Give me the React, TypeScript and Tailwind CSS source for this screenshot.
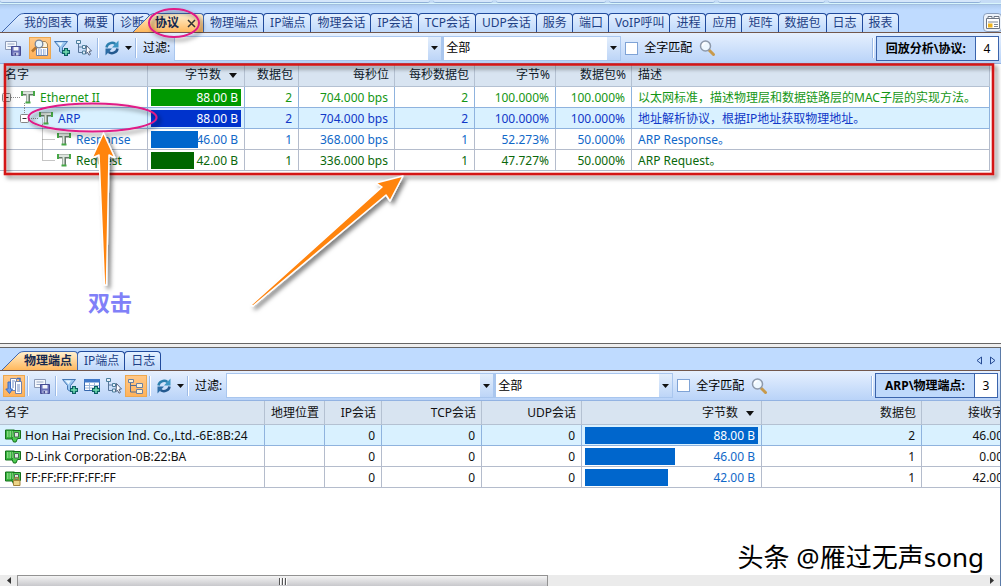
import type { ReactNode } from "react";

const FONT = "font-['Noto_Sans','Noto_Sans_CJK_SC',sans-serif]";

const topTabs = [
  "我的图表", "概要", "诊断", "协议", "物理端点", "IP端点", "物理会话", "IP会话", "TCP会话", "UDP会话",
  "服务", "端口", "VoIP呼叫", "进程", "应用", "矩阵", "数据包", "日志", "报表",
];
const bottomTabs = ["物理端点", "IP端点", "日志"];

const protocols = [
  { name: "Ethernet II", level: 0, bytes: 88, packets: 2, bps: "704.000 bps", pps: 2, bytePct: "100.000%", packetPct: "100.000%", desc: "以太网标准，描述物理层和数据链路层的MAC子层的实现方法。", text: "text-[#149614]", bar: "bg-[#009900]" },
  { name: "ARP", level: 1, bytes: 88, packets: 2, bps: "704.000 bps", pps: 2, bytePct: "100.000%", packetPct: "100.000%", desc: "地址解析协议，根据IP地址获取物理地址。", text: "text-[#1038c8]", bar: "bg-[#0033cc]" },
  { name: "Response", level: 2, bytes: 46, packets: 1, bps: "368.000 bps", pps: 1, bytePct: "52.273%", packetPct: "50.000%", desc: "ARP Response。", text: "text-[#1068c8]", bar: "bg-[#0066cc]" },
  { name: "Request", level: 2, bytes: 42, packets: 1, bps: "336.000 bps", pps: 1, bytePct: "47.727%", packetPct: "50.000%", desc: "ARP Request。", text: "text-[#0a680a]", bar: "bg-[#006600]" },
];

const endpoints = [
  { name: "Hon Hai Precision Ind. Co.,Ltd.-6E:8B:24", bytes: 88, packets: 2, received: "46.00 B", locked: false },
  { name: "D-Link Corporation-0B:22:BA", bytes: 46, packets: 1, received: "0.00 B", locked: false },
  { name: "FF:FF:FF:FF:FF:FF", bytes: 42, packets: 1, received: "42.00 B", locked: true },
];

/* ---------- icons ---------- */

function Svg({ children }: { children: ReactNode }) {
  return (
    <svg width="18" height="18" viewBox="0 0 18 18" fill="none" className="shrink-0" aria-hidden="true">
      {children}
    </svg>
  );
}

const SaveIcon = () => (
  <Svg>
    <path d="M1.5 2.5h11v8h-11z" fill="#f4f7fc" stroke="#8c9bb8" />
    <path d="M3.5 5h7M3.5 7.5h5" stroke="#98a8c4" />
    <path d="M7.500 7.500h9v9h-9z" fill="#6a70b8" stroke="#454b92" />
    <path d="M9.500 8h5v3.500h-5z" fill="#f3f5fb" />
    <path d="M9.500 13.500h5v3h-5z" fill="#c9cde6" />
    <path d="M10.500 14h1.500v2.500h-1.500z" fill="#454b92" />
  </Svg>
);

const FindIcon = () => (
  <Svg>
    <path d="M5.500 8.500h11v8h-11z" fill="#fff" stroke="#6a7fa8" />
    <path d="M10.500 8.500v-6h4l2 2.500v3.500z" fill="#fdf3dd" stroke="#a98550" />
    <path d="M7 11h8M7 13h8M7 15h8" stroke="#4f78c4" strokeDasharray="1.500 1" />
    <path d="M5.500 8 1 12.500" stroke="#b8762c" strokeWidth="2.500" />
    <circle cx="8" cy="5" r="3.800" fill="#e6f4fc" stroke="#778499" strokeWidth="1.300" />
  </Svg>
);

const Plus = () => <path d="M13 9v8M9 13h8" stroke="#0b5f62" strokeWidth="4" />;
const PlusInner = () => <path d="M13 10v6M10 13h6" stroke="#72e0b0" strokeWidth="1.500" />;

const FilterIcon = () => (
  <Svg>
    <path d="M1.500 2.500h13l-5 6v6l-3-2V8.500z" fill="#9cc8f0" stroke="#4477b4" />
    <path d="M4 3.500h6l-2.500 4z" fill="#e8f5ff" />
    <Plus />
    <PlusInner />
  </Svg>
);

const TableAddIcon = () => (
  <Svg>
    <path d="M1.500 2.500h15v11h-15z" fill="#fff" stroke="#3566ac" />
    <path d="M1 2h16v3.500H1z" fill="#3f78c8" />
    <path d="M2 8.500h14M2 11h14M6.500 6v7M11.500 6v7" stroke="#9db6d8" />
    <Plus />
    <PlusInner />
  </Svg>
);

const TreeCursorIcon = () => (
  <Svg>
    <path d="M3.500 4v9.500h4M3.500 8h4" stroke="#58769a" />
    <path d="M1.500 1.500h4v3h-4zM7.500 6.500h3v3h-3zM7.500 12h3v3h-3z" fill="#e8f0fa" stroke="#4d7f9c" />
    <path d="m11.500 6.500 5 5.500-2.500.3 1.500 3-1.500.9-1.500-3-1.500 1.500z" fill="#fff" stroke="#53627f" />
  </Svg>
);

const TreeIcon = () => (
  <Svg>
    <path d="M3.500 6v9h6M3.500 8.500h6" stroke="#536d92" />
    <path d="M1.500 2.500h5v3h-5zM9.500 6.500h6v4h-6zM9.500 12.500h6v4h-6z" fill="#fff0d0" stroke="#6a81a4" />
  </Svg>
);

const SwapIcon = () => (
  <Svg>
    <path d="M5.500 1.500h6v12h-6z" fill="#fff" stroke="#7183ad" />
    <path d="M10.500 4.500h6v12h-6z" fill="#fff" stroke="#7183ad" />
    <path d="M7 4h3M7 6h2M7 8h2M7 10h2M12 8h3M12 10h3M12 12h3M12 14h3" stroke="#6e8bc4" />
    <path d="M3 5v7H.800L4.500 16.500 7.500 12H5.500V5z" stroke="#3d6cc0" fill="#6c9cea" />
    <path d="M12 1.500h3v3" stroke="#3d6cc0" strokeWidth="1.500" />
  </Svg>
);

const RefreshIcon = () => (
  <Svg>
    <path d="M3.500 8.500C4 4.500 9 2.500 12.500 5" stroke="#2c7fae" strokeWidth="2.500" />
    <path d="M15.500 1.500v7h-6.500z" fill="#3c96c4" />
    <path d="M14.500 9.500c-.5 4-5.500 6-9 3.500" stroke="#23598f" strokeWidth="2.500" />
    <path d="M2.500 16.500v-7H9z" fill="#2b6ba4" />
  </Svg>
);

const SearchIcon = () => (
  <Svg>
    <path d="m11 11 4.500 4.500" stroke="#c89a4c" strokeWidth="3" strokeLinecap="round" />
    <circle cx="7.500" cy="7" r="5" fill="#eef8ff" stroke="#8d99ab" strokeWidth="1.500" />
    <path d="M4.500 7a3 3 0 0 1 3-3" stroke="#fff" strokeWidth="1.500" />
  </Svg>
);

const CardIcon = ({ locked }: { locked: boolean }) => (
  <svg width="17" height="15" viewBox="0 0 17 15" className="shrink-0" aria-hidden="true">
    <path d="M.500 1h9v9h-9z" fill="#35b53c" stroke="#14701c" />
    <path d="M8 1.500h7.500v8h-3l-1.500 3.500H8.500L7 9.500z" fill="#4ccb50" stroke="#14701c" />
    <path d="M2 3h6M2 5h6M2 7h6" stroke="#d5f6c8" strokeDasharray="1.500 1" />
    <path d="M9.500 3.500h4v4.500h-4z" fill="#dfe5e4" stroke="#476b50" />
    {locked && <path d="M9.500 10V8.500a2 2 0 0 1 4 0V10" fill="none" stroke="#9c8444" strokeWidth="1.500" />}
    {locked && <path d="M8.500 9.500h6.500v5H8.500z" fill="#ecd488" stroke="#a2823c" />}
  </svg>
);

const ProtocolIcon = () => (
  <svg width="16" height="14" viewBox="0 0 16 14" className="relative shrink-0" aria-hidden="true">
    <path d="M2 3.500h12" stroke="#66786a" strokeWidth="4" />
    <path d="M8 4v9" stroke="#66786a" strokeWidth="4" />
    <path d="M3 3h10M7.500 3v9" stroke="#dde5de" strokeWidth="2" />
    <path d="M2 1v5M14 1v5M5.500 12.500h5" stroke="#46a846" strokeWidth="2" />
  </svg>
);

const Caret = () => (
  <svg width="7" height="4" viewBox="0 0 7 4" className="shrink-0" aria-hidden="true">
    <path d="M0 0h7L3.500 4z" fill="#111" />
  </svg>
);

const SortArrow = () => (
  <svg width="8" height="5" viewBox="0 0 8 5" className="ml-2 inline-block align-middle" aria-hidden="true">
    <path d="M0 0h8L4 5z" fill="#111" />
  </svg>
);

// dotted guide lines and the expander box in front of a tree node
function TreeGuide({ level }: { level: number }) {
  const x = level * 18 + 7;
  const last = level === 2;
  return (
    <svg width={level * 18 + 20} height="20" className="shrink-0 overflow-visible" aria-hidden="true">
      <g stroke="#8a8a8a" strokeDasharray="1 1" fill="none">
        {last ? <path d="M42.500 -10.500v21h13" /> : <path d={`M${x + 4} 10.500h9M${x + 17.5} 16v5`} />}
        {level === 1 && <path d="M24.500 0v6" />}
      </g>
      {!last && (
        <g>
          <rect x={x - 4.5} y="6.500" width="8" height="8" rx="1" fill="#fff" stroke="#858585" />
          <path d={`M${x - 2.5} 10.500h4`} stroke="#333" />
        </g>
      )}
    </svg>
  );
}

/* ---------- controls ---------- */

function TabBar({ tabs, active, closable, children }: { tabs: string[]; active: number; closable?: boolean; children?: ReactNode }) {
  return (
    <div className="flex items-end border-b border-[#72574c] bg-[#bfdbff] pl-[2px]">
      <div role="tablist" className="flex items-end">
        {tabs.map((label, i) => {
          const on = i === active;
          const slanted = i === 0 || on;
          if (!slanted) {
            return (
              <button
                key={label}
                role="tab"
                aria-selected={false}
                className="-ml-px h-[19px] whitespace-nowrap rounded-t-[4px] border border-b-0 border-[#204a9c] bg-linear-to-b from-[#e4f0ff] to-[#bfd9fb] pl-[6px] pr-[5px] text-[12px] leading-[18px] text-[#1d3f85]"
              >
                {label}
              </button>
            );
          }
          return (
            <button
              key={label}
              role="tab"
              aria-selected={on}
              className={`relative flex h-[19px] whitespace-nowrap text-[12px] leading-[18px] ${i > 0 ? "-ml-[17px]" : ""} ${on ? "font-bold text-[#15294f]" : "text-[#1d3f85]"}`}
            >
              <svg width="22" height="19" viewBox="0 0 22 19" className="shrink-0" aria-hidden="true">
                <defs>
                  <linearGradient id={on ? "tabOn" : "tabOff"} x1="0" y1="0" x2="0" y2="1">
                    <stop offset="0" stopColor={on ? "#fff0cf" : "#e4f0ff"} />
                    <stop offset="1" stopColor={on ? "#ffb85c" : "#bfd9fb"} />
                  </linearGradient>
                </defs>
                <path d="M0 19 17 2q2-1.500 5-1.500V19z" fill={`url(#${on ? "tabOn" : "tabOff"})`} />
                <path d="M0 19 17 2q2-1.500 5-1.500" fill="none" stroke="#4068b0" />
              </svg>
              <span
                className={`flex h-[19px] items-center rounded-tr-[4px] border-r border-t pr-[5px] ${on ? "border-[#4068b0] bg-linear-to-b from-[#fff0cf] to-[#ffb85c]" : "border-[#204a9c] bg-linear-to-b from-[#e4f0ff] to-[#bfd9fb]"}`}
              >
                {label}
                {closable && on && (
                  <svg width="9" height="9" viewBox="0 0 9 9" className="ml-2 mr-[2px]" aria-hidden="true">
                    <path d="m1 1 7 7M8 1 1 8" stroke="#333" strokeWidth="1.500" />
                  </svg>
                )}
              </span>
            </button>
          );
        })}
      </div>
      {children}
    </div>
  );
}

function ToolButton({ label, on, children }: { label: string; on?: boolean; children: ReactNode }) {
  return (
    <button
      aria-label={label}
      className={`flex size-[22px] shrink-0 items-center justify-center ${on ? "border border-[#eda850] bg-linear-to-b from-[#ffc887] to-[#ffb25a]" : ""}`}
    >
      {children}
    </button>
  );
}

const Divider = () => <span className="mx-[2px] h-[20px] w-[2px] shrink-0 border-l border-[#9dbbe6] bg-white" />;

function FilterFields({ id }: { id: string }) {
  return (
    <>
      <label htmlFor={`${id}-filter`} className="mx-1 shrink-0">过滤:</label>
      <div className="flex h-[25px] w-[268px] items-center border border-[#a9c6ee] bg-white">
        <input id={`${id}-filter`} className="h-full min-w-0 flex-1 px-1 outline-none" />
        <button aria-label="展开" className="flex h-full w-[13px] items-center justify-center bg-linear-to-b from-[#e3eefc] to-[#bdd5f7]">
          <Caret />
        </button>
      </div>
      <div className="relative flex h-[25px] w-[179px] items-center border border-l-2 border-[#a9c6ee] bg-white">
        <select aria-label="范围" className="h-full w-full appearance-none pl-[2px] outline-none">
          <option>全部</option>
        </select>
        <span className="pointer-events-none absolute inset-y-0 right-0 flex w-[13px] items-center justify-center bg-linear-to-b from-[#e3eefc] to-[#bdd5f7]">
          <Caret />
        </span>
      </div>
      <label className="ml-1 flex shrink-0 items-center gap-[6px]">
        <input type="checkbox" className="size-[13px] appearance-none border border-[#7fa3d6] bg-white" />
        全字匹配
      </label>
      <button aria-label="搜索" className="ml-[6px]">
        <SearchIcon />
      </button>
    </>
  );
}

function Counter({ title, count }: { title: string; count: number }) {
  return (
    <div className="ml-auto flex items-center">
      <Divider />
      <div className="flex h-[25px] border border-[#3b64ac] text-[12px] leading-[23px]">
        <strong className="whitespace-nowrap bg-[#bfd9fb] px-[9px]">{title}</strong>
        <span className="w-[23px] border-l border-[#3b64ac] bg-white text-center">{count}</span>
      </div>
    </div>
  );
}

function ByteBar({ bytes, bar, text }: { bytes: number; bar: string; text: string }) {
  return (
    <div className="relative mx-[3px] flex h-[17px] items-center justify-end">
      <span className={`absolute inset-y-0 left-0 ${bar}`} style={{ width: `${(bytes / 88) * 100}%` }} />
      <span className={`relative pr-[3px] pt-[2px] ${bytes === 88 ? "text-white" : text}`}>{bytes}.00 B</span>
    </div>
  );
}

const th = "overflow-hidden whitespace-nowrap border-b border-r border-[#b4c1d2] px-[5px] text-right font-normal";
const tdBase = "whitespace-nowrap border-b border-r";
const td = `${tdBase} overflow-hidden pl-[5px] pr-[6px] pt-[2px] text-right`;

/* ---------- panels ---------- */

function ProtocolTable() {
  return (
    <div className="mr-[11px]">
      <table className="w-full table-fixed border-separate border-spacing-0 text-[12px] leading-[18px]">
        <colgroup>
          <col className="w-[148px]" />
          <col className="w-[97px]" />
          <col className="w-[54px]" />
          <col className="w-[96px]" />
          <col className="w-[80px]" />
          <col className="w-[81px]" />
          <col className="w-[76px]" />
          <col />
        </colgroup>
        <thead className="bg-[#d8e4f1] text-[#0f1a2a]">
          <tr className="h-[23px]">
            <th className={`${th} !text-left`}>名字</th>
            <th className={`${th} !pr-[7px]`}>字节数<SortArrow /></th>
            <th className={th}>数据包</th>
            <th className={th}>每秒位</th>
            <th className={th}>每秒数据包</th>
            <th className={th}>字节%</th>
            <th className={th}>数据包%</th>
            <th className={`${th} !pl-[6px] !text-left`}>描述</th>
          </tr>
        </thead>
        <tbody>
          {protocols.map((p) => {
            const selected = p.name === "ARP";
            const line = selected || p.level === 0 ? "border-[#8fb3de]" : "border-[#b4bccc]";
            const cell = `${td} ${line}`;
            return (
              <tr key={p.name} className={`h-[21px] ${p.text} ${selected ? "bg-[#d9f1ff]" : ""}`}>
                <td className={`${tdBase} ${line}`}>
                  <div className="flex h-[20px] items-center">
                    <TreeGuide level={p.level} />
                    <ProtocolIcon />
                    <span className="ml-1 pt-[2px]">{p.name}</span>
                  </div>
                </td>
                <td className={`${tdBase} ${line}`}>
                  <ByteBar bytes={p.bytes} bar={p.bar} text={p.text} />
                </td>
                <td className={cell}>{p.packets}</td>
                <td className={cell}>{p.bps}</td>
                <td className={cell}>{p.pps}</td>
                <td className={cell}>{p.bytePct}</td>
                <td className={cell}>{p.packetPct}</td>
                <td className={`${cell} !pl-[6px] !text-left`}>{p.desc}</td>
              </tr>
            );
          })}
        </tbody>
      </table>
    </div>
  );
}

function EndpointTable() {
  return (
    <div className="overflow-hidden">
      <table className="w-[calc(100%+41px)] table-fixed border-separate border-spacing-0 text-[12px] leading-[18px] text-[#111]">
        <colgroup>
          <col className="w-[265px]" />
          <col className="w-[60px]" />
          <col className="w-[57px]" />
          <col className="w-[100px]" />
          <col className="w-[100px]" />
          <col className="w-[180px]" />
          <col className="w-[160px]" />
          <col />
        </colgroup>
        <thead className="bg-[#d8e4f1]">
          <tr className="h-[24px]">
            <th className={`${th} !text-left`}>名字</th>
            <th className={th}>地理位置</th>
            <th className={th}>IP会话</th>
            <th className={th}>TCP会话</th>
            <th className={th}>UDP会话</th>
            <th className={`${th} !pr-[7px]`}>字节数<SortArrow /></th>
            <th className={th}>数据包</th>
            <th className={`${th} !pl-[46px] !text-left`}>接收字节数</th>
          </tr>
        </thead>
        <tbody>
          {endpoints.map((e, i) => {
            const line = i === 0 ? "border-[#8fb3de]" : "border-[#b4bccc]";
            const cell = `${td} ${line}`;
            return (
              <tr key={e.name} className={`h-[21px] ${i === 0 ? "bg-[#d9f1ff]" : ""}`}>
                <td className={cell}>
                  <div className="flex items-center gap-[3px]">
                    <CardIcon locked={e.locked} />
                    {e.name}
                  </div>
                </td>
                <td className={cell} />
                <td className={cell}>0</td>
                <td className={cell}>0</td>
                <td className={cell}>0</td>
                <td className={`${tdBase} ${line}`}>
                  <ByteBar bytes={e.bytes} bar="bg-[#0066cc]" text="text-[#1068c8]" />
                </td>
                <td className={cell}>{e.packets}</td>
                <td className={`${cell} !pr-[26px]`}>{e.received}</td>
              </tr>
            );
          })}
        </tbody>
      </table>
    </div>
  );
}

function Annotations() {
  return (
    <div className="pointer-events-none absolute inset-0 overflow-hidden">
      <svg width="1001" height="586" viewBox="0 0 1001 586" fill="none" aria-hidden="true">
        <defs>
          <filter id="drop" x="-20%" y="-20%" width="150%" height="150%">
            <feDropShadow dx="3" dy="3" stdDeviation="2" floodOpacity="0.5" />
          </filter>
        </defs>
        <g filter="url(#drop)">
          <rect x="5" y="64.500" width="988" height="109.500" stroke="#d41616" strokeWidth="2.500" />
        </g>
        <g filter="url(#drop)" stroke="#e01a86" strokeWidth="2">
          <ellipse cx="174" cy="23" rx="25" ry="14" />
          <ellipse cx="92.500" cy="117.500" rx="64" ry="14" />
        </g>
        <g filter="url(#drop)" fill="#ff8410" stroke="#fff" strokeWidth="1.500" strokeLinejoin="round">
          <path d="M103.500 133 115 158l-6-3-2.500 130h-2L99 155l-7 3z" />
          <path d="m403 176-13 25-4-6-133 111-2-1 131-118-6-4z" />
        </g>
      </svg>
      <span className="absolute left-[88px] top-[286px] text-[22px] font-bold leading-[32px] text-[#8080f8]">双击</span>
    </div>
  );
}

export default function App() {
  return (
    <div className={`relative flex h-screen flex-col overflow-hidden bg-white text-[12px] text-black ${FONT}`}>
      <section className="flex min-h-0 flex-[343] flex-col">
        {/* lower edge of the ribbon groups */}
        <div className="h-[13px] shrink-0 bg-[#bfdbff]">
          <div className="flex h-[3px] gap-[3px] bg-[#c5dcf6]">
            <span className="w-[430px] rounded-b-sm border-b border-[#8fb0d8] bg-[#d5e6fa]" />
            <span className="w-[60px] rounded-b-sm border-b border-[#8fb0d8] bg-[#d5e6fa]" />
            <span className="w-[110px] rounded-b-sm border-b border-[#8fb0d8] bg-[#d5e6fa]" />
            <span className="w-[106px] rounded-b-sm border-b border-[#8fb0d8] bg-[#d5e6fa]" />
            <span className="w-[107px] rounded-b-sm border-b border-[#8fb0d8] bg-[#d5e6fa]" />
            <span className="w-[153px] rounded-b-sm border-b border-[#8fb0d8] bg-[#d5e6fa]" />
          </div>
          <div className="h-[2px] border-b border-[#a2bfdf] bg-[#d9f6fc]" />
          <div className="h-[5px] bg-linear-to-b from-[#aecbef] to-[#bfdbff]" />
        </div>
        <TabBar tabs={topTabs} active={3} closable>
          <button aria-label="窗口" className="ml-auto -mr-px flex h-[19px] w-[19px] items-center justify-center rounded-sm border border-[#8ba0bf] bg-[#edf3fb]">
            <svg width="16" height="14" viewBox="0 0 16 14" fill="none" aria-hidden="true">
              <path d="M1.500 2.500h13v10h-13z" fill="#fff" stroke="#6e7785" />
              <path d="M3 .500h4v2H3zM9 .500h5v2H9z" fill="#fff" stroke="#6e7785" />
              <path d="M3 6h10M9 8.500h4M9 10.500h4" stroke="#7f8794" />
              <path d="M3 7.500h4.500v4H3z" fill="#f0b41e" />
            </svg>
          </button>
        </TabBar>
        <div className="flex h-[31px] shrink-0 items-center border-b border-[#93b3e2] bg-linear-to-b from-[#e6f0fe] to-[#b9d3f8] pl-[2px] pr-[2px]">
          <ToolButton label="保存"><SaveIcon /></ToolButton>
          <span className="w-[5px]" />
          <ToolButton label="查找" on><FindIcon /></ToolButton>
          <ToolButton label="添加过滤器"><FilterIcon /></ToolButton>
          <ToolButton label="定位"><TreeCursorIcon /></ToolButton>
          <Divider />
          <ToolButton label="刷新"><RefreshIcon /></ToolButton>
          <button aria-label="刷新选项" className="flex w-[10px] justify-center"><Caret /></button>
          <Divider />
          <FilterFields id="protocol" />
          <Counter title="回放分析\协议:" count={4} />
        </div>
        <ProtocolTable />
      </section>

      <div className="h-[5px] shrink-0 border-y border-[#666] bg-[#eeeeee]" />

      <section className="flex min-h-0 flex-[238] flex-col border-r border-[#5b7ba8]">
        <div className="shrink-0 bg-[#bfdbff] pt-[3px]">
          <TabBar tabs={bottomTabs} active={0}>
            <div className="ml-auto mr-1 flex gap-2 self-center">
              <button aria-label="向左">
                <svg width="6" height="9" viewBox="0 0 6 9" fill="none" stroke="#274b94"><path d="M5.500 1v7L1 4.500z" /></svg>
              </button>
              <button aria-label="向右">
                <svg width="6" height="9" viewBox="0 0 6 9" fill="none" stroke="#274b94"><path d="M.500 1v7L5 4.500z" /></svg>
              </button>
            </div>
          </TabBar>
        </div>
        <div className="flex h-[30px] shrink-0 items-center border-b border-[#93b3e2] bg-linear-to-b from-[#e6f0fe] to-[#b9d3f8] pl-[3px] pr-[2px]">
          <ToolButton label="同步" on><SwapIcon /></ToolButton>
          <Divider />
          <ToolButton label="保存"><SaveIcon /></ToolButton>
          <Divider />
          <ToolButton label="添加过滤器"><FilterIcon /></ToolButton>
          <ToolButton label="添加到表"><TableAddIcon /></ToolButton>
          <ToolButton label="定位"><TreeCursorIcon /></ToolButton>
          <ToolButton label="树形" on><TreeIcon /></ToolButton>
          <Divider />
          <ToolButton label="刷新"><RefreshIcon /></ToolButton>
          <button aria-label="刷新选项" className="flex w-[10px] justify-center"><Caret /></button>
          <Divider />
          <FilterFields id="endpoint" />
          <Counter title="ARP\物理端点:" count={3} />
        </div>
        <EndpointTable />
        <div className="mt-auto flex h-[11px] shrink-0 items-center bg-[#ebebeb]">
          <span className="flex w-[17px] justify-center">
            <svg width="4" height="7" viewBox="0 0 4 7"><path d="M4 0v7L0 3.500z" fill="#333" /></svg>
          </span>
          <div className="min-w-0 flex-1">
            <div className="flex h-[11px] w-[55%] items-center justify-center gap-px border border-b-0 border-[#929292] bg-linear-to-b from-[#f4f4f4] to-[#c8c8cc]">
              <span className="h-[7px] w-[2px] border-l border-[#555] bg-white" />
              <span className="h-[7px] w-[2px] border-l border-[#555] bg-white" />
              <span className="h-[7px] w-[2px] border-l border-[#555] bg-white" />
            </div>
          </div>
          <span className="flex w-[17px] justify-center">
            <svg width="4" height="7" viewBox="0 0 4 7"><path d="M0 0v7l4-3.500z" fill="#333" /></svg>
          </span>
        </div>
      </section>

      <Annotations />
      <span className="pointer-events-none absolute bottom-[10px] right-[17px] whitespace-nowrap text-[26px] leading-[38px] [text-shadow:1px_1px_0_#fff,-1px_-1px_0_#fff]">
        头条 @雁过无声song
      </span>
    </div>
  );
}
